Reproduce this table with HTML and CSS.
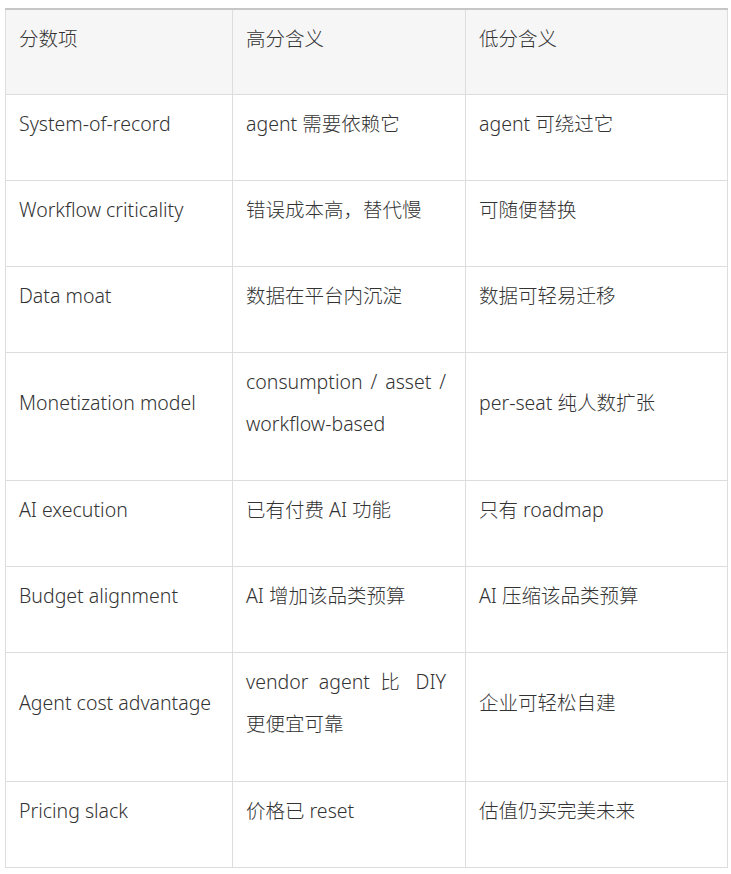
FILE: index.html
```html
<!DOCTYPE html>
<html lang="zh-CN">
<head>
<meta charset="utf-8">
<link rel="stylesheet" href="styles.css">
</head>
<body>
<div class="wrap">
<table class="score">
<colgroup><col class="c1"><col class="c2"><col class="c3"></colgroup>
<thead>
<tr><th>分数项</th><th>高分含义</th><th>低分含义</th></tr>
</thead>
<tbody>
<tr><td>System-of-record</td><td>agent 需要依赖它</td><td>agent 可绕过它</td></tr>
<tr><td>Workflow criticality</td><td>错误成本高，替代慢</td><td>可随便替换</td></tr>
<tr><td>Data moat</td><td>数据在平台内沉淀</td><td>数据可轻易迁移</td></tr>
<tr><td>Monetization model</td><td>consumption / asset / workflow-based</td><td>per-seat 纯人数扩张</td></tr>
<tr><td>AI execution</td><td>已有付费 AI 功能</td><td>只有 roadmap</td></tr>
<tr><td>Budget alignment</td><td>AI 增加该品类预算</td><td>AI 压缩该品类预算</td></tr>
<tr class="tall"><td>Agent cost advantage</td><td>vendor agent 比 DIY 更便宜可靠</td><td>企业可轻松自建</td></tr>
<tr><td>Pricing slack</td><td>价格已 reset</td><td>估值仍买完美未来</td></tr>
</tbody>
</table>
</div>
</body>
</html>
```
FILE: styles.css
```css
html, body {
  margin: 0;
  padding: 0;
  background: #ffffff;
}
.wrap {
  padding: 8px 0 0 5px;
}
.score {
  border-collapse: collapse;
  table-layout: fixed;
  width: 722px;
  font-family: "Noto Sans", "Noto Sans CJK SC", sans-serif;
  font-size: 19.5px;
  font-weight: 300;
  line-height: 42px;
  color: #333333;
}
.c1 { width: 227px; }
.c2 { width: 233px; }
.c3 { width: 262px; }
.score th, .score td {
  border: 1px solid #dddddd;
  padding: 8px 19px 35px 13px;
  text-align: justify;
  font-weight: 300;
  vertical-align: middle;
}
.score .tall td {
  padding-bottom: 36px;
}
.score th {
  background: #f6f6f6;
  border-top: 2px solid #c6c6c6;
  padding-bottom: 34px;
  vertical-align: top;
}
```
